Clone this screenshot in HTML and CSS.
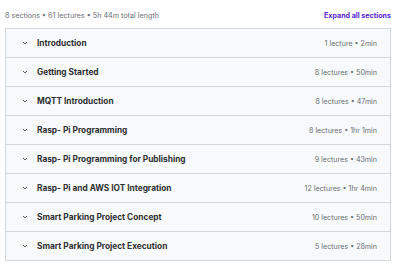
FILE: index.html
```html
<!DOCTYPE html>
<html lang="en">
<head>
    <meta charset="UTF-8">
    <meta name="viewport" content="width=device-width, initial-scale=1.0">
    <title>Course content</title>
    <link rel="stylesheet" href="styles.css">
</head>
<body>
    <div id="curriculum">
        <div class="summary">
            <span>8 sections • 61 lectures • 5h 44m total length</span>
            <button class="expand-all">Expand all sections</button>
        </div>
        <ul class="sections">
            <li class="section">
                <span class="chevron"><svg width="6" height="4" viewBox="0 0 6 4"><path d="M1 1 L3 2.9 L5 1" fill="none" stroke="#3e4143" stroke-width="0.9"/></svg></span>
                <span class="title">Introduction</span>
                <span class="meta">1 lecture • 2min</span>
            </li>
            <li class="section">
                <span class="chevron"><svg width="6" height="4" viewBox="0 0 6 4"><path d="M1 1 L3 2.9 L5 1" fill="none" stroke="#3e4143" stroke-width="0.9"/></svg></span>
                <span class="title">Getting Started</span>
                <span class="meta">8 lectures • 50min</span>
            </li>
            <li class="section">
                <span class="chevron"><svg width="6" height="4" viewBox="0 0 6 4"><path d="M1 1 L3 2.9 L5 1" fill="none" stroke="#3e4143" stroke-width="0.9"/></svg></span>
                <span class="title">MQTT Introduction</span>
                <span class="meta">8 lectures • 47min</span>
            </li>
            <li class="section">
                <span class="chevron"><svg width="6" height="4" viewBox="0 0 6 4"><path d="M1 1 L3 2.9 L5 1" fill="none" stroke="#3e4143" stroke-width="0.9"/></svg></span>
                <span class="title">Rasp- Pi Programming</span>
                <span class="meta">8 lectures • 1hr 1min</span>
            </li>
            <li class="section">
                <span class="chevron"><svg width="6" height="4" viewBox="0 0 6 4"><path d="M1 1 L3 2.9 L5 1" fill="none" stroke="#3e4143" stroke-width="0.9"/></svg></span>
                <span class="title">Rasp- Pi Programming for Publishing</span>
                <span class="meta">9 lectures • 43min</span>
            </li>
            <li class="section">
                <span class="chevron"><svg width="6" height="4" viewBox="0 0 6 4"><path d="M1 1 L3 2.9 L5 1" fill="none" stroke="#3e4143" stroke-width="0.9"/></svg></span>
                <span class="title">Rasp- Pi and AWS IOT Integration</span>
                <span class="meta">12 lectures • 1hr 4min</span>
            </li>
            <li class="section">
                <span class="chevron"><svg width="6" height="4" viewBox="0 0 6 4"><path d="M1 1 L3 2.9 L5 1" fill="none" stroke="#3e4143" stroke-width="0.9"/></svg></span>
                <span class="title">Smart Parking Project Concept</span>
                <span class="meta">10 lectures • 50min</span>
            </li>
            <li class="section">
                <span class="chevron"><svg width="6" height="4" viewBox="0 0 6 4"><path d="M1 1 L3 2.9 L5 1" fill="none" stroke="#3e4143" stroke-width="0.9"/></svg></span>
                <span class="title">Smart Parking Project Execution</span>
                <span class="meta">5 lectures • 28min</span>
            </li>
        </ul>
    </div>
</body>
</html>
```

FILE: styles.css
```css
body {
    margin: 0;
    background-color: #ffffff;
    font-family: Inter, "Liberation Sans", sans-serif;
    color: #2d2f31;
}

#curriculum {
    width: 386px;
    margin-left: 5px;
}

.summary {
    height: 28px;
    display: flex;
    justify-content: space-between;
    align-items: center;
    padding-top: 2px;
    box-sizing: border-box;
    font-size: 7.2px;
    color: #6a6f73;
}

.expand-all {
    border: none;
    background: none;
    padding: 0;
    font-family: inherit;
    font-size: 7.1px;
    font-weight: 700;
    color: #5624d0;
}

.sections {
    list-style: none;
    margin: 0;
    padding: 0;
    border: 1px solid #d1d7dc;
    border-bottom: none;
}

.section {
    height: 28px;
    display: flex;
    align-items: center;
    background-color: #f7f9fa;
    border-bottom: 1px solid #d1d7dc;
    padding: 0 13px 0 16px;
}

.chevron {
    width: 15px;
    display: flex;
    align-items: center;
}

.title {
    flex: 1;
    font-size: 8.3px;
    font-weight: 700;
}

.meta {
    font-size: 7.1px;
    color: #6a6f73;
}
```
